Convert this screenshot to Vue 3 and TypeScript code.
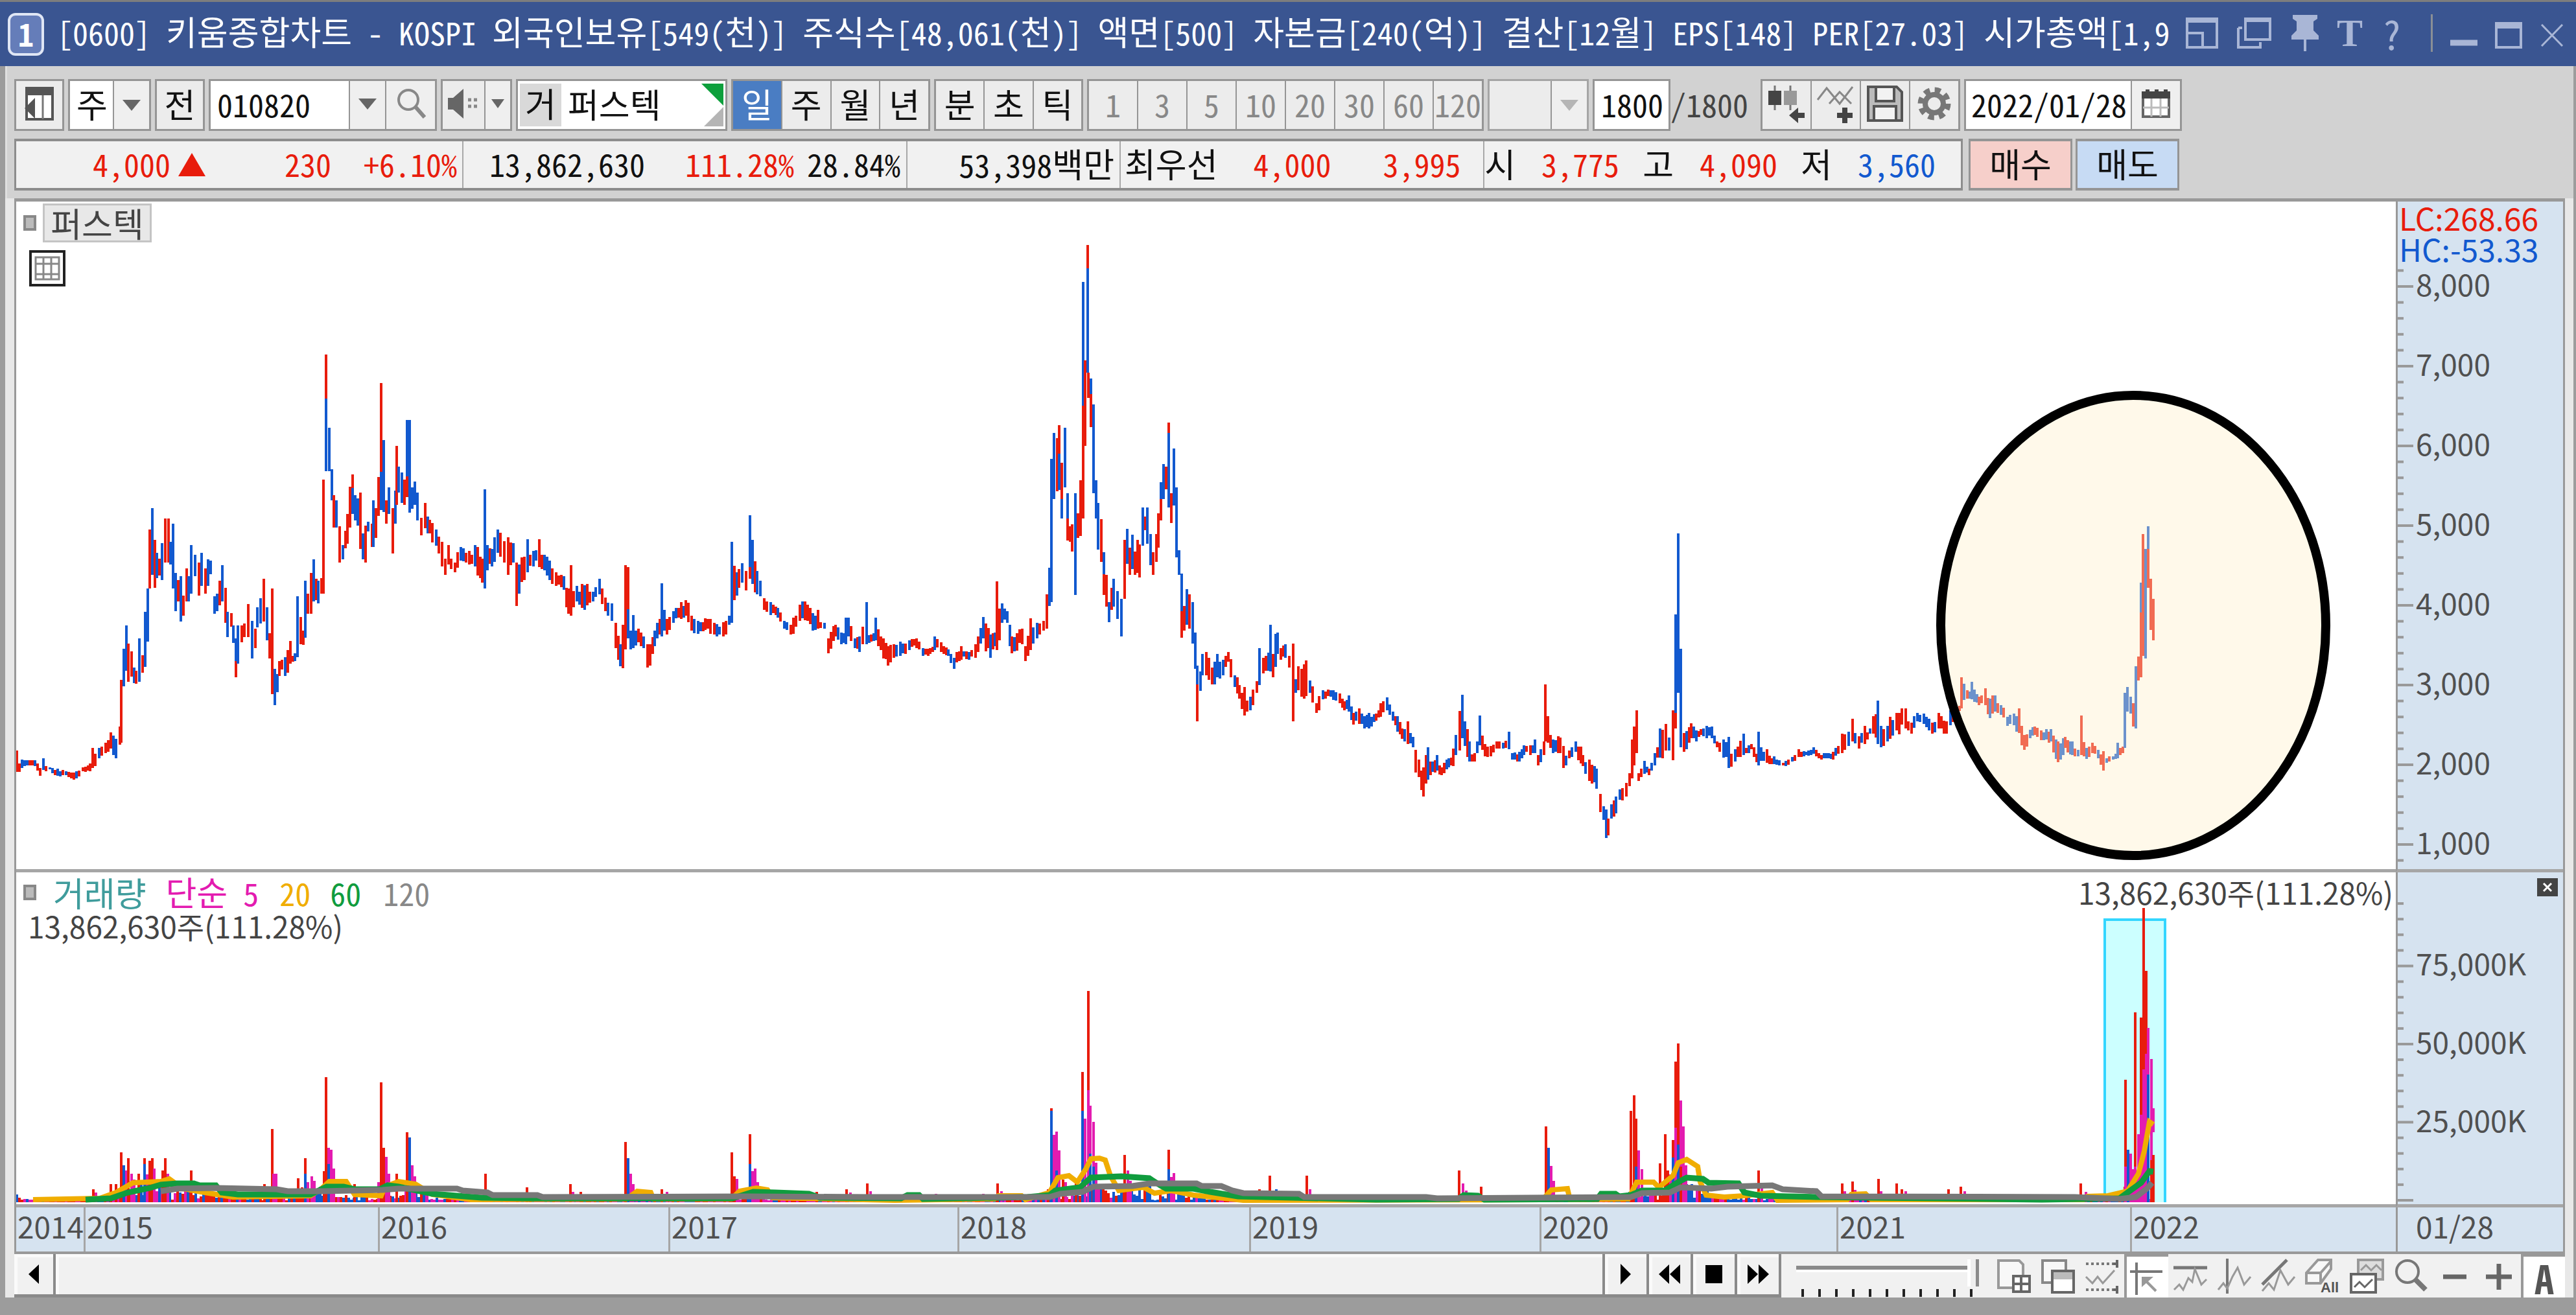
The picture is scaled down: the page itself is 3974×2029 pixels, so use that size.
<script setup lang="ts">
import { ref } from 'vue'

type Bar = { x: number; top: number; bottom: number; color: string }

const RED = '#e81c0c'
const BLUE = '#1259cf'
const MAGENTA = '#e31bb0'
const palette: Record<string, string> = { r: RED, b: BLUE, m: MAGENTA }

const windowTitle =
  '[0600] 키움종합차트 - KOSPI 외국인보유[549(천)] 주식수[48,061(천)] 액면[500] 자본금[240(억)] 결산[12월] EPS[148] PER[27.03] 시가총액[1,9'

const titleRuns = windowTitle.match(/[가-힣]+|[^가-힣]+/g) ?? []
const isHangul = (text: string): boolean => /[가-힣]/.test(text)

const code = ref('010820')
const stockName = ref('퍼스텍')
const barCount = ref('1800')
const baseDate = ref('2022/01/28')
const speed = ref(100)
const period = ref('일')
const periods = ['일', '주', '월', '년']
const intraday = ['분', '초', '틱']
const minutes = ['1', '3', '5', '10', '20', '30', '60', '120']

const priceLabels = ['8,000', '7,000', '6,000', '5,000', '4,000', '3,000', '2,000', '1,000']
const volumeLabels = ['75,000K', '50,000K', '25,000K']
const years = [
  { label: '2014', start: 25, end: 129 },
  { label: '2015', start: 129, end: 583 },
  { label: '2016', start: 583, end: 1031 },
  { label: '2017', start: 1031, end: 1477 },
  { label: '2018', start: 1477, end: 1927 },
  { label: '2019', start: 1927, end: 2375 },
  { label: '2020', start: 2375, end: 2833 },
  { label: '2021', start: 2833, end: 3286 },
  { label: '2022', start: 3286, end: 3696 },
]
const yearColumns = years.map((y) => `minmax(0, ${y.end - y.start}fr)`).join(' ')

const priceTicks = Array.from({ length: 38 }, (_, i) => {
  const price = 8200 - i * 200
  return { y: 1426 - price * 0.123, major: price % 1000 === 0 }
})
const volumeTicks = Array.from({ length: 20 }, (_, i) => ({ y: 1852 - i * 24.1, major: i % 5 === 0 }))

// x,high,low[,colour[,second colour,split level]]
const priceSource = `26,1158,1191,r 38,1173,1182,b 54,1173,1182,b 62,1185,1197,r 67,1170,1188,b 77,1184,1187,b 89,1186,1197,b 102,1190,1196 114,1192,1203,r 128,1184,1190,r 139,1178,1190,r 143,1154,1185,r 153,1154,1170,b 163,1146,1162,r 171,1130,1155,r 179,1140,1170,b 185,1121,1149,r 187,1049,1146,r 191,1001,1059,b 195,965,1035,b 198,993,1052,r 203,1005,1044,r 210,1035,1055,r 215,985,1052,b 220,1011,1038,r 224,944,1029,b 228,908,990,b 231,817,908,r 235,784,887,b 239,833,907,r 242,853,892,b 250,838,895,b 255,800,868,r 260,800,868,r 263,836,871,b 267,808,908,b 271,884,943,b 275,895,928,r 279,889,959,b 283,919,950,r 288,877,928,r 291,889,928,b 295,841,916,b 301,856,889,b 307,868,919,r 311,853,904,b 317,877,916,r 321,863,904,b 325,865,886,b 331,920,947,b 339,896,934,r 343,872,928,b 348,907,961,r 351,944,983,b 357,946,967,r 360,965,992,b 364,985,1045,b,r,1020 367,965,1024,b 373,965,991,r 383,932,983,r 389,958,1016,b 394,970,1000,r 397,937,968,b 402,923,962,b 407,893,959,r 412,937,988,b 416,977,1016,r 420,908,1071,r 424,1032,1088,b 431,1020,1043,r 440,1014,1043,b 448,989,1024,r 455,1008,1020,b 459,920,1014,b 464,952,994,r 468,973,995,r 471,896,984,b 475,916,947,r 480,884,947,r 484,863,928,b 491,896,931,b 496,892,916,r 499,740,916,r 503,547,727,r,b,615 508,660,727,b 512,724,772,b 515,764,814,r 519,772,814,b 524,812,868,r 529,841,863,b 536,793,839,r 540,751,814,r 544,732,793,r,b,753 548,764,803,b 552,769,811,b 556,760,847,r 560,823,863,b 564,811,868,r 568,805,820,b 574,808,844,r 576,772,844,b 580,784,830,r 584,736,796,r 588,591,787,r,b,728 592,679,790,b 596,772,808,r 600,752,793,b 606,784,854,r 610,757,808,b 612,688,779,r 615,720,760,b 620,729,776,b 624,740,779,r 628,648,767,b,r,735 632,648,791,b 640,743,779,b 644,760,803,b 650,799,826,r 656,776,815,r 663,802,823,r 673,817,842,b 682,836,874,r 687,862,887,r 692,841,871,r 702,868,883,r 711,844,865,b 724,850,871,r 733,841,874,b 744,862,899,r 748,755,908,b 752,841,880,b 759,847,874,b 768,817,853,b 778,835,868,r 784,829,887,r 792,838,868,b 797,868,935,r 805,860,898,r 814,832,883,b 823,850,874,b 832,832,875,r 840,856,880,b 848,865,895,b 858,883,904,r 870,889,910,b 877,908,947,r 881,872,950,r 890,904,928,b 898,901,938,r 906,901,934,r 915,913,928,b 925,893,917,b 934,922,943,r 944,931,958,b 950,961,1000,r 957,994,1028,b 961,964,1031,r 965,872,1002,r 969,875,985,r,b,940 973,973,1002,b 977,949,1000,b 985,970,991,r 993,982,1000,b 999,994,1030,r
1003,994,1027,r 1010,973,997,b 1014,961,985,b 1021,900,982,b 1025,941,973,b 1029,955,979,r 1039,943,961,b 1051,929,955,r 1058,926,950,r 1067,950,973,r 1077,958,978,b 1088,954,972,r 1102,961,979,r 1116,960,982,r 1125,950,964,b 1129,836,961,b 1133,873,926,r 1140,878,907,r 1145,869,899,b 1151,881,911,r 1157,795,893,b,r,875 1161,833,901,b 1168,881,917,b 1173,896,920,b 1179,923,941,r 1189,929,949,b 1200,938,953,b 1210,958,970,b 1220,964,979,r 1234,933,958,r 1246,933,958,r 1254,946,973,b 1262,941,970,r 1272,961,970,b 1278,985,1008,r 1289,964,982,r 1298,976,994,b 1305,953,994,b 1309,953,982,b 1319,985,1000,b 1326,982,1006,b 1331,967,994,r 1337,929,994,b 1344,979,990,r 1351,953,988,b 1359,982,1003,r 1370,997,1027,r 1379,994,1015,r 1389,990,1012,b 1403,988,1003,b 1414,985,1000,r 1424,1000,1012,b 1435,1000,1009 1442,982,1003,b 1452,991,1006,r 1463,1002,1012,b 1472,1015,1032,b 1483,997,1018,r 1495,1006,1018,b 1505,994,1015,r 1517,952,985,b 1528,979,1015,b 1535,976,997,b 1538,897,1003,r 1546,931,961,b 1554,943,961,b 1561,982,1008,r 1577,970,994,r 1582,997,1020,r 1590,954,1003,r 1600,961,985,b 1610,958,973,r 1615,917,970,r 1619,876,935,b 1622,708,929,b 1626,668,770,b 1631,676,758,r 1634,656,756,r,b,700 1638,714,800,r,b,770 1643,660,752,b 1647,761,834,b,r,800 1651,812,836,r 1654,809,851,r 1659,761,918,b 1663,792,830,r 1667,741,827,r 1671,435,800,b,r,626 1674,556,688,r 1678,378,575,r,b,414 1679,575,614,r 1683,584,659,b,r,608 1687,624,761,b 1691,741,800,b 1694,776,848,b 1699,801,867,r 1703,852,918,b,r,886 1707,887,936,r 1711,929,960,b 1718,893,936,b 1724,912,955,b 1730,924,982,b 1735,833,924,r 1739,816,870,b 1743,845,887,r 1747,825,878,b 1751,851,887,r 1755,833,884,r 1758,840,891,r 1763,783,842,b 1767,797,818,r 1770,783,839,b 1775,824,872,b 1779,852,887,r 1784,824,867,r 1787,792,845,r 1791,744,803,b,r,770 1795,716,770,b 1799,720,755,r 1803,652,783,r,b,668 1807,761,807,r 1811,692,780,b 1815,752,860,b 1819,849,887,b 1823,885,984,b,r,943 1827,935,973,r 1831,909,964,b 1835,917,970,r 1840,929,993,b 1844,976,1032,b 1847,1027,1113,b,r,1056 1852,1036,1066,b 1855,1009,1042,b 1861,1006,1042,r 1870,1030,1056,r 1878,1009,1045,b 1887,1018,1042,b 1895,1006,1021,r 1905,1042,1060,b 1912,1057,1078,r 1920,1060,1104,r 1929,1075,1096,b 1939,1051,1069,r 1943,1000,1057,b 1949,1015,1039,r 1960,964,1036,b 1964,1009,1045,r 1971,976,1009,b 1976,1000,1018,r 1983,994,1015,b 1989,1012,1030,r 1995,993,1113,r 1999,1048,1069,b
2003,1028,1065,r 2008,1032,1075,r 2015,1019,1074,r 2021,1050,1069,b 2031,1085,1100,r 2041,1065,1079,b 2053,1065,1075,b 2067,1070,1085,r 2074,1082,1096,r 2081,1073,1098,b 2088,1100,1118,r 2097,1093,1117,r 2105,1105,1124,b 2112,1100,1124,b 2123,1101,1112,r 2130,1085,1106,r 2140,1076,1096,b 2149,1098,1112,b 2156,1105,1129,b 2163,1124,1140,r 2172,1113,1148,r 2180,1137,1153,b 2184,1157,1192,r 2189,1172,1199,r 2196,1184,1229,r 2203,1153,1203,b 2210,1175,1191,b 2217,1165,1189,b 2224,1184,1196,r 2235,1170,1184,b 2242,1155,1182,r 2246,1134,1165,b 2252,1097,1158,r 2256,1072,1139,b 2260,1113,1151,b 2267,1144,1175,b 2275,1162,1175,r 2283,1104,1150,b 2291,1148,1167,r 2300,1151,1167,r 2309,1144,1155,r 2319,1146,1155,b 2328,1129,1156,b 2333,1162,1172,b 2344,1160,1175,b 2351,1150,1165,b 2361,1150,1165,r 2368,1141,1162,b 2373,1165,1181,r 2382,1144,1165,r 2384,1056,1144,r 2388,1105,1146,r 2396,1141,1162,b 2407,1138,1162,r 2412,1151,1185,r 2421,1158,1170,r 2431,1144,1160,b 2442,1165,1182,r 2452,1172,1205,r 2463,1186,1217,b 2469,1225,1253,r 2474,1244,1265,b 2478,1249,1293,b 2481,1263,1289,r 2486,1241,1263,b 2493,1229,1255,b 2499,1218,1234,b 2509,1208,1229,r 2514,1193,1213,r 2518,1141,1201,r 2521,1121,1181,r 2525,1096,1162,r 2528,1193,1205,r 2537,1174,1194,b 2544,1186,1196,r 2553,1162,1181,b 2561,1124,1169,b 2570,1117,1158,r 2575,1138,1158,b 2581,1096,1173,r 2585,948,1124,b,r,1100 2589,823,1069,b 2593,1001,1153,b 2598,1131,1160,r 2609,1116,1139,r 2617,1127,1144,b 2624,1125,1134,r 2633,1120,1139,b 2641,1121,1139,b 2649,1144,1153,r 2659,1141,1169,b 2667,1137,1185,b 2677,1156,1175,b 2690,1132,1165,b 2702,1148,1156,r 2713,1129,1181,b 2726,1156,1177,r 2737,1167,1179,b 2751,1177,1181,r 2765,1168,1175,b 2775,1156,1168,r 2786,1160,1165,b 2798,1153,1163,b 2810,1165,1172,r 2821,1162,1170,b 2828,1160,1172,r 2836,1151,1163,r 2842,1132,1162,r 2852,1129,1151,b 2858,1109,1144,r 2868,1136,1155,r 2877,1120,1148,r 2885,1124,1132,b 2890,1105,1132,r 2897,1081,1148,b 2902,1120,1153,b 2912,1120,1144,b 2926,1100,1127,r 2940,1093,1124,r 2949,1115,1132,r 2958,1100,1113,b 2968,1101,1117,b 2981,1115,1132,r 2991,1100,1124,r 3003,1113,1132,r 3009,1096,1119,b 3019,1093,1101,r 3026,1045,1093,r 3030,1055,1080,b 3035,1065,1078,r 3042,1052,1079,b 3053,1075,1088,r 3063,1062,1088,r 3070,1078,1108,b 3078,1073,1098,b 3087,1088,1103,b 3097,1106,1120,b 3107,1101,1119,b 3115,1093,1131,r 3123,1134,1157,r 3132,1126,1139,b 3139,1121,1134,r 3149,1127,1142,r 3164,1125,1144,b 3175,1144,1176,r 3186,1137,1154,r 3197,1144,1165,b 3206,1157,1167,b 3211,1104,1165,r 3219,1154,1171,b 3228,1146,1162,r 3237,1157,1170,b 3245,1159,1189,r 3250,1170,1177,b 3260,1167,1172,b 3267,1146,1170,b 3275,1152,1162,r 3278,1069,1154,b 3282,1060,1098,b 3287,1075,1101,b 3291,1085,1121,r 3295,1028,1124,b 3299,1013,1050,r 3303,899,1045,b,r,945 3306,824,1012,r 3310,847,1016,b 3314,812,907,b,r,847 3318,893,972,r 3322,924,988,r`

const noise = (n: number): number => {
  const s = Math.sin(n * 12.9898) * 43758.5453
  return s - Math.floor(s)
}

const tint = (key: string | undefined, seed: number): string => palette[key ?? ''] ?? (noise(seed) > 0.5 ? RED : BLUE)

function buildPrice(): Bar[] {
  const points = priceSource.split(/\s+/).map((entry) => {
    const [x, hi, lo, first, second, split] = entry.split(',')
    return { x: +x, hi: +hi, lo: +lo, first, second, split: Number(split) }
  })
  const bars: Bar[] = []
  points.forEach((p, i) => {
    const color = tint(p.first, p.x)
    if (p.second) {
      bars.push({ x: p.x, top: p.hi, bottom: p.split, color })
      bars.push({ x: p.x, top: p.split, bottom: p.lo, color: tint(p.second, p.x) })
    } else {
      bars.push({ x: p.x, top: p.hi, bottom: p.lo, color })
    }
    const next = points[i + 1]
    if (!next) return
    for (let x = p.x + 4; x < next.x - 2; x += 4) {
      const t = (x - p.x) / (next.x - p.x)
      const calm = Math.min(p.lo - p.hi, next.lo - next.hi)
      const a = p.lo - Math.min(p.lo - p.hi, calm * 1.3) / 2
      const b = next.lo - Math.min(next.lo - next.hi, calm * 1.3) / 2
      const mid = a + (b - a) * t + (noise(x) - 0.5) * calm * 0.4
      const half = Math.max(4, (calm * (0.6 + noise(x + 7) * 0.6)) / 2 + Math.abs(b - a) / 6)
      bars.push({ x, top: mid - half, bottom: mid + half, color: noise(x * 3) > 0.48 ? RED : BLUE })
    }
  })
  return bars
}

const volumeSource = `26,1843,b 144,1835,r 148,1840,m 171,1827,r 179,1827,r 187,1778,r 191,1798,b 195,1806,m 198,1787,r 203,1811,m 207,1820,m 214,1811,r 223,1787,r,b,1796 227,1812,m 231,1791,r 235,1787,r 238,1803,m 255,1787,r 251,1806,r 259,1811,m 295,1806,r 408,1827,r 420,1742,r 422,1811,m 426,1811,m 460,1818,r 471,1787,r,b,1811 475,1824,m 481,1815,m 485,1822,m 500,1807,r 503,1662,r 507,1771,m,b,1796 511,1774,m 515,1803,m 547,1827,r 584,1824,m 588,1670,r 592,1771,r 596,1785,m 600,1811,m 612,1811,r 628,1747,r 632,1755,b 636,1798,m 640,1815,m 659,1838,m 749,1811,r 813,1832,r 880,1827,r 884,1839,m 896,1839,r 965,1762,r 969,1787,b 973,1811,m 977,1827,m 1021,1835,r 1029,1839,m 1129,1778,r 1133,1815,r 1137,1819,m 1157,1750,r,b,1796 1161,1807,m 1165,1803,m 1169,1824,m 1260,1839,r 1306,1835,r 1312,1840,m 1338,1826,r 1343,1838,m 1444,1842,m 1517,1842,m 1539,1826,r 1545,1838,m 1617,1835,r 1622,1710,r,b,1714 1626,1751,m 1630,1746,m,b,1806 1634,1775,m 1640,1820,r 1644,1824,m 1660,1822,r 1670,1654,r,b,1714 1674,1726,m 1679,1529,r,m,1682 1682,1706,m,b,1780 1687,1731,m,b,1800 1691,1794,m 1695,1832,m 1735,1782,r 1740,1806,m 1744,1822,m 1803,1774,r,b,1804 1807,1816,m 1811,1810,m 1943,1835,r 1959,1814,r 1969,1835,b 2016,1814,r 2021,1835,m 2210,1844,m 2251,1806,r 2257,1826,m 2262,1837,m 2285,1831,r 2385,1738,r 2389,1771,b 2393,1799,m 2397,1822,m 2516,1714,r 2521,1690,r 2524,1726,r,b,1800 2528,1775,m 2533,1804,m 2561,1795,r 2569,1750,r 2573,1806,r 2577,1812,m 2581,1759,r,b,1786 2585,1638,r,m,1740 2589,1610,r,b,1766 2593,1698,m,r,1800 2597,1738,m 2601,1798,m 2713,1806,r 2718,1832,m 2842,1826,r 2846,1838,m 2858,1823,r 2862,1836,m 2898,1819,r 2902,1838,m 2926,1826,r 2934,1835,r 2940,1838,m 3006,1835,r 3025,1831,r 3031,1838,m 3210,1826,r 3218,1839,m 3279,1666,r,m,1800 3283,1774,b 3287,1780,m 3291,1804,m 3294,1562,r,m,1800 3299,1750,m 3303,1570,r,m,1720 3307,1401,r,m,1650 3311,1498,r,m,1626 3314,1586,m,b,1658 3319,1634,m,r,1790`

function buildVolume(): Bar[] {
  const base = 1855
  const busy: [number, number, number][] = [
    [190, 300, 28], [300, 400, 14], [400, 458, 8], [458, 520, 22], [520, 570, 12], [586, 662, 16],
    [1150, 1180, 12], [1618, 1700, 30], [1700, 1830, 24], [1830, 1900, 10],
    [2514, 2560, 16], [2560, 2640, 30], [2640, 2700, 10], [3278, 3322, 40],
  ]
  const bars: Bar[] = []
  for (let x = 26; x < 3322; x += 4) {
    const zone = busy.find(([from, to]) => x >= from && x < to)
    const height = 3 + noise(x) * (zone ? zone[2] : 4)
    const pick = noise(x + 11)
    const color = zone ? (pick > 0.6 ? RED : pick > 0.15 ? BLUE : MAGENTA) : pick > 0.7 ? RED : pick > 0.45 ? BLUE : MAGENTA
    bars.push({ x, top: base - height, bottom: base, color })
  }
  volumeSource.split(/\s+/).forEach((entry) => {
    const [x, top, first, second, split] = entry.split(',')
    bars.push({ x: +x, top: +top, bottom: second ? +split : base, color: tint(first, +x) })
    if (second) bars.push({ x: +x, top: +split, bottom: base, color: tint(second, +x) })
  })
  bars.push({ x: 3322, top: 1710, bottom: 1747, color: MAGENTA })
  bars.push({ x: 3322, top: 1782, bottom: base, color: RED })
  return bars
}

const priceBars = buildPrice()
const volumeBars = buildVolume()

const gold =
  '51,1851 154,1849 179,1840 205,1825 248,1823 261,1819 282,1834 316,1840 359,1847 479,1845 496,1834 508,1823 534,1823 547,1843 588,1845 594,1831 615,1823 641,1827 667,1843 726,1851 966,1850 983,1838 1004,1840 1008,1850 1128,1850 1141,1838 1167,1833 1184,1836 1192,1848 1380,1852 1534,1850 1540,1845 1576,1845 1582,1851 1619,1840 1632,1817 1649,1814 1662,1824 1675,1804 1683,1788 1696,1787 1705,1790 1713,1814 1726,1837 1747,1834 1764,1832 1781,1841 1807,1837 1841,1844 1918,1852 2380,1851 2393,1836 2418,1834 2422,1851 2512,1850 2525,1824 2551,1824 2559,1832 2581,1814 2589,1794 2602,1789 2619,1800 2623,1824 2632,1844 2660,1847 2691,1845 2734,1840 2742,1852 2850,1851 2856,1843 2878,1842 2887,1851 3214,1851 3220,1846 3252,1845 3282,1838 3299,1811 3308,1776 3316,1731 3322,1735'
const green =
  '132,1851 171,1849 197,1840 231,1833 248,1828 273,1826 299,1826 308,1829 333,1829 342,1840 367,1843 479,1843 504,1831 530,1831 547,1835 586,1835 598,1829 615,1831 667,1842 743,1848 820,1849 1130,1849 1162,1839 1196,1840 1248,1842 1265,1848 1390,1849 1400,1844 1418,1844 1424,1850 1585,1847 1619,1844 1628,1837 1666,1832 1683,1817 1730,1815 1773,1818 1790,1829 1799,1834 1841,1834 1867,1839 1910,1846 2123,1851 2250,1850 2258,1844 2280,1845 2290,1851 2464,1850 2470,1842 2492,1842 2498,1846 2516,1844 2533,1837 2568,1837 2589,1824 2602,1817 2627,1819 2636,1825 2682,1826 2691,1840 2716,1845 2802,1847 3150,1851 3270,1849 3303,1825 3316,1807 3322,1808'
const gray =
  '248,1838 274,1834 333,1833 427,1835 444,1838 496,1838 590,1836 615,1834 705,1834 714,1837 752,1840 760,1844 829,1844 837,1847 1154,1846 1340,1847 1619,1847 1636,1842 1670,1839 1687,1831 1747,1830 1773,1826 1846,1826 1854,1830 1884,1830 1901,1837 1918,1841 2004,1842 2012,1847 2200,1847 2217,1849 2516,1847 2533,1841 2576,1840 2593,1832 2640,1834 2665,1831 2734,1829 2750,1835 2802,1838 2810,1846 3201,1847 3270,1850 3295,1847 3312,1834 3320,1825'
</script>

<template>
  <main class="window">
    <header class="titlebar">
      <span class="badge">1</span>
      <h1><span v-for="(run, i) in titleRuns" :key="i" :class="{ kr: isHangul(run) }">{{ run }}</span></h1>
      <nav class="window-tools" aria-label="창 도구">
        <button aria-label="축소"><svg width="52" height="52" viewBox="0 0 52 52"><path d="M3 4h46v44H3z M3 26h24v22" /><path d="M3 6h46" stroke-width="8" /></svg></button>
        <button aria-label="복사"><svg width="56" height="52" viewBox="0 0 56 52"><path d="M14 4h38v32H14z M3 18v30h34v-8 M3 18h6" /><path d="M14 6h38" stroke-width="6" /></svg></button>
        <button aria-label="고정"><svg width="46" height="60" viewBox="0 0 46 60"><path d="M4 2h38v6l-6 4v14l8 8v6H2v-6l8-8V12L4 8z" fill="currentColor" stroke="none" /><path d="M23 38v20" /></svg></button>
        <button class="letter serif" aria-label="글꼴">T</button>
        <button class="letter" aria-label="도움말">?</button>
        <i class="split"></i>
        <button aria-label="최소화"><svg width="42" height="52" viewBox="0 0 42 52"><path d="M0 41h42" stroke-width="9" /></svg></button>
        <button aria-label="최대화"><svg width="42" height="52" viewBox="0 0 42 52"><path d="M2 11h38v37H2z" /><path d="M2 14h38" stroke-width="10" /></svg></button>
        <button aria-label="닫기"><svg width="38" height="52" viewBox="0 0 38 52"><path d="M3 13l32 33M35 13L3 46" stroke-width="3" /></svg></button>
      </nav>
    </header>

    <section class="body">
      <div class="controls">
        <div class="toolbar">
          <div class="box w77"><button aria-label="패널 숨기기"><svg width="46" height="54" viewBox="0 0 46 54"><path d="M3 3h40v48H3z" fill="#fff" stroke="#555" stroke-width="4" /><path d="M3 2h40v12H3z" fill="#555" /><path d="M28 14v37" stroke="#777" stroke-width="3" /><path d="M0 34l16-16v32z" fill="#555" /></svg></button></div>
          <div class="box w128 white">
            <select class="kind" aria-label="종목 구분"><option>주</option></select>
            <span class="arrow"></span>
          </div>
          <div class="box w77"><button>전</button></div>
          <div class="box w352 white">
            <input v-model="code" class="code" aria-label="종목코드" />
            <button class="arrow" aria-label="종목 목록"></button>
            <button class="search" aria-label="종목 검색"><svg width="48" height="50" viewBox="0 0 48 50"><circle cx="20" cy="19" r="15" fill="none" stroke="#888" stroke-width="4" /><path d="M31 30l14 16" stroke="#888" stroke-width="6" /></svg></button>
          </div>
          <div class="box w110">
            <button aria-label="음성"><svg width="48" height="48" viewBox="0 0 48 48"><path d="M0 15h8L24 1v46L8 33H0z" fill="#666" /><path d="M31 18h5M31 28h5M40 18h5M40 28h5" stroke="#888" stroke-width="5" /></svg></button>
            <button class="arrow small" aria-label="음성 설정"></button>
          </div>
          <div class="box w326 white name">
            <span class="tag">거</span>
            <input v-model="stockName" aria-label="종목명" />
            <svg width="34" height="66" viewBox="0 0 34 66"><path d="M0 0h34v34z" fill="#0d9f3c" /><path d="M4 66l30-30v30z" fill="#b5b5b5" /></svg>
          </div>
          <div class="box w307"><button v-for="p in periods" :key="p" :class="{ on: p === period }" @click="period = p">{{ p }}</button></div>
          <div class="box w230"><button v-for="p in intraday" :key="p">{{ p }}</button></div>
          <div class="box w612"><button v-for="m in minutes" :key="m" class="num" disabled>{{ m }}</button></div>
          <div class="box w156 faint">
            <select class="custom" aria-label="분 단위" disabled><option></option></select>
            <span class="arrow off"></span>
          </div>
          <div class="count">
            <div class="box w120 white"><input v-model="barCount" aria-label="봉 개수" /></div>
            <span class="total">/1800</span>
          </div>
          <div class="box w308 icons">
            <button aria-label="봉 추가"><svg width="60" height="60" viewBox="0 0 60 60"><path d="M12 2v38M36 2v38" stroke="#777" stroke-width="3" /><path d="M2 10h20v22H2z" fill="#444" /><path d="M26 10h20v22H26z" fill="#999" /><path d="M34 48l14-12v24zM46 44h12v8H46z" fill="#444" /></svg></button>
            <button aria-label="지표 추가"><svg width="60" height="60" viewBox="0 0 60 60"><path d="M2 24L16 6l20 24L56 4M20 30L36 12l18 18" fill="none" stroke="#888" stroke-width="3" /><path d="M44 36v24M32 48h24" stroke="#444" stroke-width="8" /></svg></button>
            <button aria-label="저장"><svg width="58" height="58" viewBox="0 0 58 58"><path d="M3 3h44l8 8v44H3z" fill="#bbb" stroke="#555" stroke-width="4" /><path d="M15 3h28v22H15zM12 33h34v22H12z" fill="#f2f2f2" stroke="#555" stroke-width="4" /></svg></button>
            <button aria-label="설정"><svg width="54" height="54" viewBox="0 0 54 54"><circle cx="27" cy="27" r="21" fill="none" stroke="#777" stroke-width="9" stroke-dasharray="9 7.5" /><circle cx="27" cy="27" r="14" fill="none" stroke="#777" stroke-width="8" /></svg></button>
          </div>
          <div class="box w336 white date">
            <input v-model="baseDate" aria-label="기준일" />
            <button aria-label="달력"><svg width="44" height="44" viewBox="0 0 44 44"><path d="M2 8h40v34H2z" fill="#fff" stroke="#666" stroke-width="4" /><path d="M0 3h6v-3h6v3h8v-3h6v3h8v-3h6v3h4v11H0z" fill="#444" /><path d="M15 14v28M29 14v28M2 28h40" stroke="#bbb" stroke-width="3" /></svg></button>
          </div>
        </div>

        <div class="quote-row">
          <div class="quote">
            <div class="cell price">
              <span class="up">4,000</span>
              <svg width="42" height="36" viewBox="0 0 42 36"><path d="M21 0l21 36H0z" fill="#e81c0c" /></svg>
              <span class="up change">230</span><span class="up rate">+6.10%</span>
            </div>
            <div class="cell traded"><span>13,862,630</span><span class="up">111.28%</span><span>28.84%</span></div>
            <div class="cell amount"><span>53,398<span class="kr">백만</span></span></div>
            <div class="cell best"><span class="kr">최우선</span><span class="up">4,000</span><span class="up">3,995</span></div>
            <div class="cell range">
              <span class="kr">시</span><span class="up">3,775</span><span class="kr">고</span><span class="up">4,090</span><span class="kr">저</span><span class="down">3,560</span>
            </div>
          </div>
          <button class="order buy">매수</button>
          <button class="order sell">매도</button>
        </div>
      </div>

      <div class="chart">
        <div class="pane price-pane">
          <svg class="plot" viewBox="25 311 3671 1030" preserveAspectRatio="none" aria-label="주가 차트">
            <g shape-rendering="crispEdges">
              <rect v-for="(b, i) in priceBars" :key="i" :x="b.x - 2" :y="b.top" width="4" :height="b.bottom - b.top" :fill="b.color" />
            </g>
            <ellipse cx="3291" cy="965" rx="297" ry="355" fill="#ffeec8" fill-opacity="0.38" stroke="#000" stroke-width="14" />
          </svg>
          <div class="pane-tag"><i></i><span>퍼스텍</span></div>
          <button class="grid-button" aria-label="데이터 표"><svg width="56" height="56" viewBox="0 0 56 56"><path d="M2 2h52v52H2z" fill="#fff" stroke="#222" stroke-width="4" /><path d="M10 11h36v34H10zM10 21h36M10 37h36M22 11v34M34 11v34" fill="none" stroke="#888" stroke-width="3" /></svg></button>
        </div>
        <div class="axis">
          <svg class="ticks" viewBox="0 311 24 1030" width="24" height="1030"><path v-for="(t, i) in priceTicks" :key="i" :d="`M0 ${t.y}h${t.major ? 24 : 9}`" /></svg>
          <p class="gain up">LC:268.66</p>
          <p class="gain down">HC:-53.33</p>
          <p v-for="p in priceLabels" :key="p" class="level">{{ p }}</p>
        </div>

        <div class="pane volume-pane">
          <svg class="plot" viewBox="25 1346 3671 512" preserveAspectRatio="none" aria-label="거래량 차트">
            <path d="M3247 1855V1419H3340V1855" fill="#ccffff" stroke="#33d6ff" stroke-width="4" />
            <g shape-rendering="crispEdges">
              <rect v-for="(b, i) in volumeBars" :key="i" :x="b.x - 2" :y="b.top" width="4" :height="b.bottom - b.top" :fill="b.color" />
            </g>
            <g fill="none" stroke-width="8">
              <polyline :points="gold" stroke="#f0ad00" />
              <polyline :points="green" stroke="#109c3e" stroke-width="9" />
              <polyline :points="gray" stroke="#787878" stroke-width="9" />
            </g>
          </svg>
          <div class="legend">
            <i></i><span class="teal">거래량</span><span class="magenta"><span class="kr">단순</span> 5</span><span class="gold">20</span><span class="green">60</span><span class="gray">120</span>
          </div>
          <p class="volume-text">13,862,630주(111.28%)</p>
          <p class="volume-text right">13,862,630주(111.28%)</p>
        </div>
        <div class="axis volume-axis">
          <svg class="ticks" viewBox="0 1346 24 512" width="24" height="512"><path v-for="(t, i) in volumeTicks" :key="i" :d="`M0 ${t.y}h${t.major ? 24 : 9}`" /></svg>
          <button class="close-pane" aria-label="지표 닫기"><svg width="32" height="28" viewBox="0 0 32 28"><path d="M0 0h32v28H0z" fill="#444" /><path d="M10 8l12 12M22 8L10 20" stroke="#fff" stroke-width="3" /></svg></button>
          <p v-for="v in volumeLabels" :key="v" class="level">{{ v }}</p>
        </div>

        <div class="years" :style="{ gridTemplateColumns: yearColumns }"><span v-for="y in years" :key="y.label">{{ y.label }}</span></div>
        <div class="last-date">01/28</div>
      </div>

      <footer class="bottom">
        <button class="step" aria-label="왼쪽으로"><svg width="20" height="30" viewBox="0 0 20 30"><path d="M18 0v30L2 15z" /></svg></button>
        <div class="track" role="scrollbar" aria-label="차트 이동" aria-controls="app" aria-valuenow="100"></div>
        <button class="step" aria-label="오른쪽으로"><svg width="20" height="32" viewBox="0 0 20 32"><path d="M2 0v32l16-16z" /></svg></button>
        <button class="step" aria-label="되감기"><svg width="34" height="30" viewBox="0 0 34 30"><path d="M16 0v30L0 15zM33 0v30L17 15z" /></svg></button>
        <button class="step" aria-label="정지"><svg width="26" height="28" viewBox="0 0 26 28"><path d="M0 0h26v28H0z" /></svg></button>
        <button class="step" aria-label="빨리 감기"><svg width="34" height="30" viewBox="0 0 34 30"><path d="M1 0v30l16-15zM18 0v30l16-15z" /></svg></button>
        <div class="speed">
          <input v-model="speed" type="range" min="0" max="100" aria-label="재생 속도" />
          <div class="marks"><i v-for="n in 11" :key="n"></i></div>
        </div>
        <nav class="tools" aria-label="차트 도구">
          <button aria-label="창 추가"><svg viewBox="0 0 54 54"><path d="M3 3h32l6 6v36H3z" fill="#f8f8f8" stroke="#999" /><path d="M26 27h25v24H26zM38 27v24M26 39h25" fill="#fff" stroke="#666" /></svg></button>
          <button aria-label="창 겹치기"><svg viewBox="0 0 54 54"><path d="M3 3h36v34H3z" fill="#f8f8f8" stroke="#888" /><path d="M18 19h33v33H18z" fill="#fff" stroke="#666" /><path d="M20 21h29v11H20z" fill="#bbb" stroke="none" /></svg></button>
          <button aria-label="지표 범위"><svg viewBox="0 0 54 54"><path d="M2 8h44M2 48h44" stroke="#777" stroke-dasharray="4 4" /><path d="M50 2v12M50 42v12M44 8h6M44 48h6" stroke="#666" /><path d="M2 28l10 10 8-10 8 10 18-20" stroke="#999" stroke-width="3" /></svg></button>
          <button class="active" aria-label="십자선"><svg viewBox="0 0 54 54"><path d="M10 4v50M0 18h50" stroke="#777" /><path d="M18 26h18L18 42z" fill="#999" stroke="none" /><path d="M24 32l16 16" stroke="#999" /></svg></button>
          <button aria-label="수평선"><svg viewBox="0 0 54 54"><path d="M1 14h52" stroke="#777" stroke-width="5" /><path d="M2 48l8-8 6 8 8-18 6 6 4-20 10 24 8-8" stroke="#999" stroke-width="3" /></svg></button>
          <button aria-label="수직선"><svg viewBox="0 0 54 54"><path d="M16 0v54" stroke="#777" /><path d="M2 48l8-10 6 8 8-18 8-14 10 26 10-12" stroke="#999" stroke-width="3" /></svg></button>
          <button aria-label="추세선"><svg viewBox="0 0 54 54"><path d="M2 40L40 2" stroke="#777" stroke-width="5" /><path d="M2 50l10-12 8 10 10-30 12 22 10-12" stroke="#999" stroke-width="3" /></svg></button>
          <button aria-label="전체 지우기"><svg viewBox="0 0 54 54"><path d="M2 22L20 2h20v14L24 38H2zM2 22h22v16M24 22L40 4" fill="#f8f8f8" stroke="#999" /><text x="24" y="52" class="all">All</text></svg></button>
          <button aria-label="차트 저장"><svg viewBox="0 0 54 54"><path d="M14 2h38v30H14z" fill="#ddd" stroke="#999" /><path d="M18 18l8-8 8 8 8-8 8 8" stroke="#999" stroke-width="3" /><path d="M3 24h38v28H3z" fill="#fff" stroke="#666" /><path d="M8 44l8-8 8 8 12-12" stroke="#666" stroke-width="3" /></svg></button>
          <button aria-label="확대경"><svg viewBox="0 0 54 54"><circle cx="22" cy="20" r="17" fill="none" stroke="#777" /><path d="M34 32l16 16" stroke="#777" stroke-width="8" /></svg></button>
          <button aria-label="축소 보기"><svg viewBox="0 0 54 54"><path d="M9 28h36" stroke="#666" stroke-width="7" /></svg></button>
          <button aria-label="확대 보기"><svg viewBox="0 0 54 54"><path d="M7 28h40M27 8v40" stroke="#666" stroke-width="7" /></svg></button>
          <button class="active letter-a" aria-label="자동">A</button>
        </nav>
      </footer>
    </section>
  </main>
</template>

<style>
body {
  margin: 0;
  background: #9c9c9c;
}
</style>

<style scoped>
* {
  box-sizing: border-box;
}
.window {
  font-family: 'Noto Sans Mono CJK KR', 'Noto Sans CJK KR', monospace;
  font-size: 48px;
  line-height: 60px;
  color: #111;
  background: #9c9c9c;
  padding-bottom: 13px;
}
button,
input,
select {
  font: inherit;
  color: inherit;
  border: 0;
  padding: 0;
  margin: 0;
  background: transparent;
  border-radius: 0;
  min-width: 0;
  appearance: none;
}
button {
  display: flex;
  align-items: center;
  justify-content: center;
}
svg {
  display: block;
  flex: none;
  overflow: visible;
}
.plot {
  overflow: hidden;
}
p,
h1 {
  margin: 0;
  font: inherit;
}
.kr {
  font-size: 52px;
}
.titlebar {
  display: flex;
  align-items: center;
  height: 102px;
  padding-left: 12px;
  background: #3a5591;
  border-top: 3px solid #7d7d7d;
  color: #fff;
}
.badge {
  width: 56px;
  height: 66px;
  border: 4px solid #dfe6f5;
  border-radius: 12px;
  background: #657db9;
  font-weight: 700;
  line-height: 54px;
  text-align: center;
}
h1 {
  flex: 1;
  min-width: 0;
  margin-left: 20px;
  padding-bottom: 8px;
  overflow: hidden;
  white-space: pre;
}
.window-tools {
  display: flex;
  align-items: center;
  gap: 27px;
  padding: 0 18px 4px 22px;
  color: #a9b6d6;
}
.window-tools svg {
  fill: none;
  stroke: currentColor;
  stroke-width: 4;
}
.letter {
  width: 38px;
  font-size: 60px;
}
.serif {
  font-family: 'Liberation Serif', serif;
  font-weight: 700;
}
.split {
  width: 3px;
  height: 58px;
  margin-left: 14px;
  background: #8a8f96;
}
.body {
  border: solid #9c9c9c;
  border-width: 0 4px 0 8px;
  background: #e8e8e8;
}
.controls {
  padding: 20px 14px 12px 11px;
  background: #d2d2d2;
  border-left: 3px solid #e0e0e0;
}
.toolbar,
.quote-row,
.count {
  display: flex;
  align-items: center;
}
.toolbar {
  gap: 6px;
}
.box {
  display: flex;
  flex: none;
  height: 80px;
  border: 3px solid #959595;
  background: #ececec;
}
.box > button {
  flex: 1;
  padding-bottom: 4px;
  font-size: 52px;
}
.box > input,
.box > select {
  padding-bottom: 4px;
}
.box > * + button,
.box > * + .arrow {
  border-left: 2px solid #959595;
}
.white {
  background: #fff;
}
.white > button,
.arrow {
  background: #efefef;
}
.box > .arrow {
  display: flex;
  flex: none;
  align-items: center;
  justify-content: center;
  width: 56px;
}
.arrow::after {
  content: '';
  border: solid transparent;
  border-width: 17px 14px 0;
  border-top-color: #666;
}
.box > .arrow.small {
  width: 40px;
}
.arrow.small::after {
  border-width: 14px 10px 0;
  border-top-color: #666;
}
.arrow.off::after {
  border-top-color: #b5b5b5;
}
.faint {
  border-color: #a5a5a5;
}
.kind {
  flex: 1;
  padding-left: 10px;
  font-size: 52px;
}
.custom {
  flex: 1;
}
.white > .search {
  flex: none;
  width: 77px;
}
.code {
  flex: 1;
  padding-left: 10px;
}
.w77 { width: 77px; }
.w110 { width: 110px; }
.w120 { width: 120px; }
.w128 { width: 128px; }
.w156 { width: 156px; }
.w230 { width: 230px; }
.w307 { width: 307px; }
.w308 { width: 308px; }
.w326 { width: 326px; }
.w336 { width: 336px; }
.w352 { width: 352px; }
.w612 { width: 612px; }
.w120 input {
  width: 100%;
  text-align: right;
  padding-right: 8px;
}
.name {
  align-items: center;
  padding: 0 3px;
  font-size: 52px;
}
.name input {
  flex: 1;
  padding-left: 10px;
}
.tag {
  width: 64px;
  height: 66px;
  background: #d9d9d9;
  text-align: center;
}
.on {
  background: #4a7dc3;
  color: #fff;
}
.box > .num {
  color: #888;
  font-size: 48px;
}
.total {
  width: 133px;
  padding-bottom: 4px;
  color: #444;
}
.date input {
  flex: 1;
  padding-left: 8px;
}
.date > button {
  flex: none;
  width: 76px;
}
.quote-row {
  gap: 5px;
  margin-top: 12px;
}
.quote {
  display: flex;
  flex: none;
  width: 3006px;
  height: 80px;
  margin-right: 4px;
  border: solid #8d8d8d;
  border-width: 4px 3px;
  background: #f1f1f1;
}
.cell {
  display: flex;
  align-items: center;
  padding-bottom: 4px;
  text-align: right;
  border-right: 2px solid #a8a8a8;
  white-space: nowrap;
}
.cell:last-child {
  border-right: 0;
}
.price {
  width: 690px;
  padding-left: 118px;
}
.price svg {
  margin: 4px 0 0 12px;
}
.change,
.rate {
  width: 194px;
}
.traded {
  width: 685px;
}
.traded span:first-child {
  width: 280px;
}
.traded span:nth-child(2) {
  width: 230px;
}
.traded span:last-child {
  width: 164px;
}
.amount {
  width: 329px;
  justify-content: flex-end;
  padding-right: 8px;
}
.best {
  width: 561px;
  padding-left: 6px;
}
.best span + span {
  width: 175px;
}
.best span + span + span {
  width: 200px;
}
.range {
  flex: 1;
}
.range span:nth-child(odd) {
  width: 48px;
}
.range span:nth-child(even) {
  width: 160px;
}
.range span + span:nth-child(odd) {
  width: 84px;
}
.up {
  color: #e81c0c;
}
.down {
  color: #1259cf;
}
.order {
  width: 160px;
  height: 80px;
  padding-bottom: 4px;
  border: solid #959595;
  border-width: 4px 3px;
  font-size: 52px;
}
.buy {
  background: #f6cfca;
}
.sell {
  background: #c7dbf4;
}
.chart {
  display: grid;
  grid-template-columns: minmax(0, 1fr) 258px;
  margin: 0 13px 0 14px;
  border: solid #999;
  border-width: 5px 3px 4px;
}
.pane {
  position: relative;
  background: #fff;
}
.price-pane,
.volume-pane {
  border-bottom: 5px solid #a6a6a6;
}
.plot {
  width: 100%;
  height: 1030px;
}
.volume-pane .plot {
  height: 512px;
}
.axis {
  position: relative;
  height: 1035px;
  border-left: 3px solid #999;
  border-bottom: 5px solid #a6a6a6;
  background: #d6e3f0;
}
.axis,
.years,
.last-date {
  font-family: 'Noto Sans CJK KR', sans-serif;
  font-size: 46px;
  color: #505050;
}
.ticks {
  position: absolute;
  top: 0;
  left: 0;
  stroke: #999;
  stroke-width: 4;
}
.gain {
  font-size: 48px;
  line-height: 48px;
  padding-left: 2px;
}
.gain.up {
  color: #e81c0c;
}
.gain.down {
  color: #1259cf;
}
.level {
  margin-bottom: 63px;
  padding-left: 28px;
}
.level:last-child {
  margin-bottom: 0;
}
.volume-axis {
  height: 517px;
  padding-top: 9px;
}
.volume-axis .level {
  margin-bottom: 61px;
}
.close-pane {
  margin: 0 8px 72px auto;
}
.pane-tag,
.legend,
.grid-button,
.volume-text {
  position: absolute;
}
.pane-tag {
  display: flex;
  align-items: center;
  gap: 10px;
  top: 3px;
  left: 11px;
}
.pane-tag i,
.legend i {
  width: 20px;
  height: 24px;
  border: 4px solid #888;
  background: #bbb;
}
.pane-tag span {
  width: 168px;
  border: 3px solid #c4c4c4;
  background: #e8e8e8;
  text-align: center;
  font-size: 52px;
  line-height: 54px;
  color: #444;
}
.grid-button {
  top: 75px;
  left: 20px;
}
.legend {
  display: flex;
  align-items: center;
  top: 0;
  left: 11px;
}
.teal {
  margin: 0 30px 0 26px;
  color: #3f9c9c;
  font-size: 52px;
}
.magenta {
  margin-right: 32px;
  color: #e31bb0;
}
.gold {
  margin-right: 30px;
  color: #f0ad00;
}
.green {
  margin-right: 34px;
  color: #109c3e;
}
.gray {
  color: #888;
}
.volume-text {
  top: 52px;
  left: 18px;
  font-family: 'Noto Sans CJK KR', sans-serif;
  font-size: 46px;
  color: #444;
}
.volume-text.right {
  top: 0;
  left: auto;
  right: 4px;
}
.years {
  display: grid;
  height: 68px;
  background: #d6e3f0;
}
.years,
.last-date {
  line-height: 56px;
}
.years span {
  padding-left: 2px;
  border-left: 3px solid #a6a6a6;
}
.years span:first-child {
  border-left: 0;
}
.last-date {
  border-left: 3px solid #999;
  background: #d6e3f0;
  padding-left: 28px;
}
.bottom {
  display: flex;
  height: 67px;
  margin: 0 13px 14px 14px;
  background: #f1f1f1;
}
.step {
  flex: none;
  width: 68px;
  border: solid #8a8a8a;
  border-width: 0 4px 5px 0;
  box-shadow: inset 5px 5px #fafafa;
}
.step:first-child {
  width: 64px;
}
.track {
  flex: 1;
  border: solid #8a8a8a;
  border-width: 0 4px 5px 0;
  box-shadow: inset 5px 5px #fafafa;
}
.speed {
  width: 325px;
  padding: 8px 18px 0 23px;
}
.speed input {
  display: block;
  width: 282px;
  height: 42px;
}
.speed input::-webkit-slider-runnable-track {
  height: 42px;
  background: linear-gradient(#f1f1f1 10px, #8a8a8a 10px, #8a8a8a 16px, #fff 16px, #fff 20px, #f1f1f1 20px);
}
.speed input::-webkit-slider-thumb {
  appearance: none;
  width: 18px;
  height: 42px;
  border-right: 5px solid #8a8a8a;
  border-left: 5px solid #fff;
  background: #eee;
}
.marks {
  display: flex;
  justify-content: space-between;
  width: 264px;
  margin: 4px 0 0 8px;
}
.marks i {
  width: 4px;
  height: 12px;
  background: #222;
}
.tools {
  display: flex;
}
.tools button {
  width: 68px;
}
.tools svg {
  width: 54px;
  height: 54px;
  fill: none;
  stroke-width: 4;
}
.tools .active {
  background: #fff;
  border: solid #999;
  border-width: 4px 0 0 4px;
}
.all {
  font: 700 22px 'Liberation Sans', sans-serif;
  fill: #555;
  stroke: none;
}
.tools .letter-a {
  font-weight: 700;
  font-size: 60px;
  color: #555;
}
</style>
